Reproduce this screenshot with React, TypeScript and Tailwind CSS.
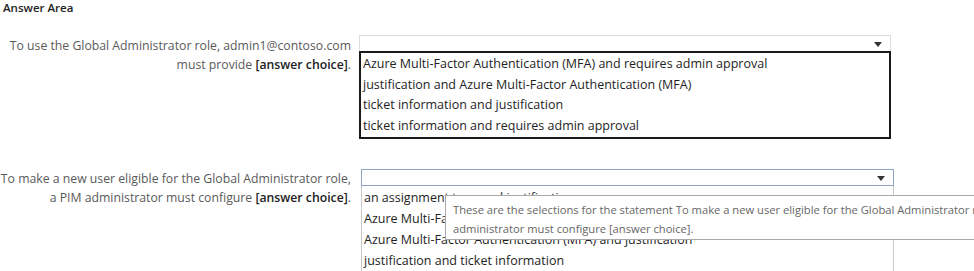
import React from "react";

const firstChoices = [
  "Azure Multi-Factor Authentication (MFA) and requires admin approval",
  "justification and Azure Multi-Factor Authentication (MFA)",
  "ticket information and justification",
  "ticket information and requires admin approval",
];

const secondChoices = [
  "an assignment type and justification",
  "Azure Multi-Factor Authentication (MFA) and ticket information",
  "Azure Multi-Factor Authentication (MFA) and justification",
  "justification and ticket information",
];

function Arrow() {
  return (
    <svg width="8" height="5" viewBox="0 0 8 5" className="absolute right-[8px] top-[6px]">
      <path d="M0 0 L8 0 L4 5 Z" fill="#333" />
    </svg>
  );
}

function Question({ lines }: { lines: string[] }) {
  return (
    <div className="w-[351px] shrink-0 text-right text-[12.25px] leading-[19px] text-[#5a5a5a]">
      <div>{lines[0]}</div>
      <div>
        {lines[1]} <span className="font-semibold text-[#222]">[answer choice]</span>.
      </div>
    </div>
  );
}

export default function App() {
  return (
    <div className="relative w-[974px] h-[271px] overflow-hidden bg-white font-['Open_Sans',sans-serif]">
      <div className="pl-[3px] text-[11.5px] leading-[16px] font-semibold text-[#222]">
        Answer Area
      </div>

      <div className="mt-[19px] flex">
        <div className="pt-[1px]">
          <Question
            lines={[
              "To use the Global Administrator role, admin1@contoso.com",
              "must provide",
            ]}
          />
        </div>
        <div className="ml-[8px] w-[532px]">
          <div className="relative h-[16px] border border-b-0 border-[#dcdcdc]">
            <Arrow />
          </div>
          <div className="border-2 border-[#1a1a1a] py-[1px] text-[12.5px] leading-[20.5px] text-[#1e1e1e]">
            {firstChoices.map((c) => (
              <div key={c} className="px-[2px] whitespace-nowrap">
                {c}
              </div>
            ))}
          </div>
        </div>
      </div>

      <div className="mt-[30px] flex">
        <div>
          <Question
            lines={[
              "To make a new user eligible for the Global Administrator role,",
              "a PIM administrator must configure",
            ]}
          />
        </div>
        <div className="ml-[10px] w-[533px]">
          <div className="relative h-[17px] border border-[#8ea4c0]">
            <Arrow />
          </div>
          <div className="h-[90px] border border-t-0 border-[#c8c8c8] pt-[1px] text-[12.5px] leading-[21px] text-[#1e1e1e]">
            {secondChoices.map((c) => (
              <div key={c} className="px-[2px] whitespace-nowrap">
                {c}
              </div>
            ))}
          </div>
        </div>
      </div>

      {/* tooltip over the second list, runs past the right edge */}
      <div className="absolute left-[445px] top-[195px] w-[560px] border border-[#a8a8a8] bg-white px-[7px] pt-[4px] pb-[1px] text-[11.2px] leading-[19px] text-[#666] whitespace-nowrap">
        <div>
          These are the selections for the statement To make a new user eligible for the Global Administrator role, a PIM
        </div>
        <div>administrator must configure [answer choice].</div>
      </div>
    </div>
  );
}
